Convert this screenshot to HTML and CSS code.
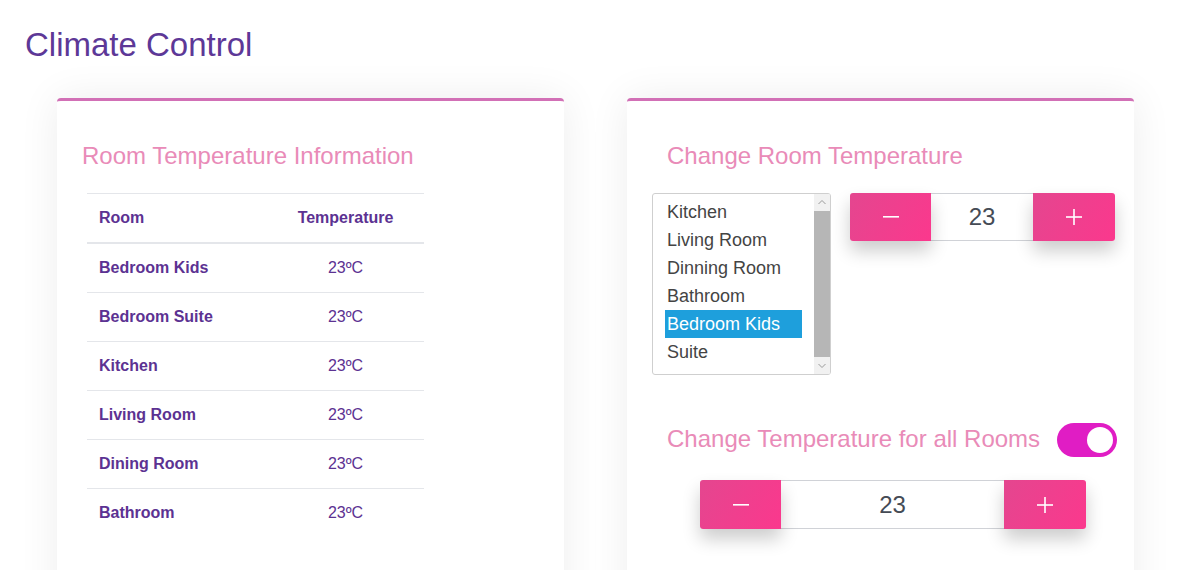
FILE: index.html
```html
<!DOCTYPE html>
<html lang="en">
<head>
<meta charset="utf-8">
<title>Climate Control</title>
<link rel="stylesheet" href="styles.css">
</head>
<body>
<h1 class="title">Climate Control</h1>
<main class="cards">
  <section class="card card-info">
    <h2 class="card-heading">Room Temperature Information</h2>
    <table class="temp-table">
      <thead>
        <tr><th class="col-room">Room</th><th class="col-temp">Temperature</th></tr>
      </thead>
      <tbody>
        <tr><td class="col-room">Bedroom Kids</td><td class="col-temp">23ºC</td></tr>
        <tr><td class="col-room">Bedroom Suite</td><td class="col-temp">23ºC</td></tr>
        <tr><td class="col-room">Kitchen</td><td class="col-temp">23ºC</td></tr>
        <tr><td class="col-room">Living Room</td><td class="col-temp">23ºC</td></tr>
        <tr><td class="col-room">Dining Room</td><td class="col-temp">23ºC</td></tr>
        <tr><td class="col-room">Bathroom</td><td class="col-temp">23ºC</td></tr>
      </tbody>
    </table>
  </section>
  <section class="card card-control">
    <h2 class="card-heading heading-indent">Change Room Temperature</h2>
    <div class="room-row">
      <div class="listbox" role="listbox">
        <ul class="options">
          <li class="option">Kitchen</li>
          <li class="option">Living Room</li>
          <li class="option">Dinning Room</li>
          <li class="option">Bathroom</li>
          <li class="option selected">Bedroom Kids</li>
          <li class="option">Suite</li>
        </ul>
        <div class="scrollbar">
          <div class="sb-btn">
            <svg width="16" height="17" viewBox="0 0 16 17"><path d="M4.5 10 L8 6.5 L11.5 10" fill="none" stroke="#9a9a9a" stroke-width="1"/></svg>
          </div>
          <div class="sb-thumb"></div>
          <div class="sb-btn">
            <svg width="16" height="17" viewBox="0 0 16 17"><path d="M4.5 7 L8 10.5 L11.5 7" fill="none" stroke="#9a9a9a" stroke-width="1"/></svg>
          </div>
        </div>
      </div>
      <div class="spinner spinner-small">
        <button class="spin-btn spin-minus" aria-label="decrease">
          <svg width="16" height="16" viewBox="0 0 16 16"><rect x="0" y="7" width="16" height="1.6" fill="#fff"/></svg>
        </button>
        <div class="spin-value">23</div>
        <button class="spin-btn spin-plus" aria-label="increase">
          <svg width="16" height="16" viewBox="0 0 16 16"><rect x="0" y="7.2" width="16" height="1.6" fill="#fff"/><rect x="7.2" y="0" width="1.6" height="16" fill="#fff"/></svg>
        </button>
      </div>
    </div>
    <div class="all-row">
      <h2 class="card-heading heading-indent nowrap">Change Temperature for all Rooms</h2>
      <div class="toggle"><span class="knob"></span></div>
    </div>
    <div class="spinner spinner-wide">
      <button class="spin-btn spin-minus" aria-label="decrease">
        <svg width="16" height="16" viewBox="0 0 16 16"><rect x="0" y="7" width="16" height="1.6" fill="#fff"/></svg>
      </button>
      <div class="spin-value">23</div>
      <button class="spin-btn spin-plus" aria-label="increase">
        <svg width="16" height="16" viewBox="0 0 16 16"><rect x="0" y="7.2" width="16" height="1.6" fill="#fff"/><rect x="7.2" y="0" width="1.6" height="16" fill="#fff"/></svg>
      </button>
    </div>
  </section>
</main>
</body>
</html>
```
FILE: styles.css
```css
html, body {
  margin: 0;
  padding: 0;
  overflow: hidden;
  background: #fff;
  font-family: "Liberation Sans", Arial, sans-serif;
}

.title {
  margin: 26px 0 0 25px;
  font-size: 33px;
  line-height: 38px;
  font-weight: normal;
  color: #5d3897;
}

.cards {
  display: flex;
  gap: 63px;
  padding-left: 57px;
  margin-top: 34px;
}

.card {
  width: 507px;
  height: 520px;
  flex-shrink: 0;
  box-sizing: border-box;
  background: #fff;
  border-top: 3px solid #d270b6;
  border-radius: 4px;
  box-shadow: 0 0 40px rgba(0, 0, 0, 0.075);
  padding: 41px 25px 0 25px;
}

.card-control {
  padding-right: 10px;
}

.card-heading {
  margin: 0;
  font-size: 24px;
  line-height: 28px;
  font-weight: normal;
  color: #e98bb8;
}

.heading-indent {
  margin-left: 15px;
}

.nowrap {
  white-space: nowrap;
}

/* Table */
.temp-table {
  margin: 23px 0 0 5px;
  width: 337px;
  border-collapse: collapse;
  color: #5c3292;
  font-size: 16px;
  line-height: 24px;
}

.temp-table th,
.temp-table td {
  padding: 12px;
  border-top: 1px solid #e4e6ea;
}

.temp-table thead th {
  border-bottom: 2px solid #e4e6ea;
}

.col-room {
  width: 156px;
  text-align: left;
  font-weight: bold;
}

.col-temp {
  text-align: center;
}

th.col-temp {
  font-weight: bold;
}

td.col-temp {
  font-weight: normal;
}

/* Room selector row */
.room-row {
  display: flex;
  align-items: flex-start;
  margin-top: 23px;
}

.listbox {
  width: 179px;
  height: 182px;
  flex-shrink: 0;
  box-sizing: border-box;
  border: 1px solid #cfcfcf;
  border-radius: 3px;
  display: flex;
  overflow: hidden;
}

.options {
  list-style: none;
  margin: 0;
  padding: 4px 12px 0 12px;
  flex: 1;
}

.option {
  height: 28px;
  line-height: 28px;
  padding-left: 2px;
  font-size: 18px;
  color: #444;
  white-space: nowrap;
}

.option.selected {
  background: #1e9fdc;
  color: #fff;
}

.scrollbar {
  width: 16px;
  flex-shrink: 0;
  display: flex;
  flex-direction: column;
  background: #f1f1f1;
}

.sb-btn {
  height: 17px;
  background: #f1f1f1;
  display: flex;
}

.sb-thumb {
  flex: 1;
  background: #b6b6b6;
}

/* Spinners */
.spinner {
  display: flex;
  flex-shrink: 0;
  height: 48px;
}

.spinner-small {
  margin-left: 19px;
}

.spinner-wide {
  margin: 23px 0 0 48px;
  height: 49px;
  width: max-content;
}

.spin-btn {
  border: none;
  padding: 0;
  margin: 0;
  width: 81px;
  flex-shrink: 0;
  display: flex;
  align-items: center;
  justify-content: center;
  background: linear-gradient(120deg, #e4468f 0%, #fb388d 100%);
  box-shadow: 0 10px 18px rgba(0, 0, 0, 0.2);
  position: relative;
  z-index: 1;
}

.spin-minus {
  border-radius: 3px 0 0 3px;
}

.spin-plus {
  width: 82px;
  border-radius: 0 3px 3px 0;
}

.spin-value {
  box-sizing: border-box;
  flex-shrink: 0;
  border-top: 1px solid #d0d2d7;
  border-bottom: 1px solid #d0d2d7;
  background: #fff;
  display: flex;
  align-items: center;
  justify-content: center;
  font-size: 24px;
  color: #454b55;
}

.spinner-small .spin-value {
  width: 102px;
}

.spinner-wide .spin-value {
  width: 223px;
}

/* All rooms row */
.all-row {
  display: flex;
  align-items: center;
  gap: 17px;
  margin-top: 48px;
}

.all-row .card-heading {
  margin-top: -3px;
}

.toggle {
  width: 60px;
  height: 34px;
  flex-shrink: 0;
  border-radius: 17px;
  background: #e01dc4;
  display: flex;
  align-items: center;
  justify-content: flex-end;
  padding-right: 4px;
  box-sizing: border-box;
}

.knob {
  width: 26px;
  height: 26px;
  border-radius: 50%;
  background: #fff;
}
```
